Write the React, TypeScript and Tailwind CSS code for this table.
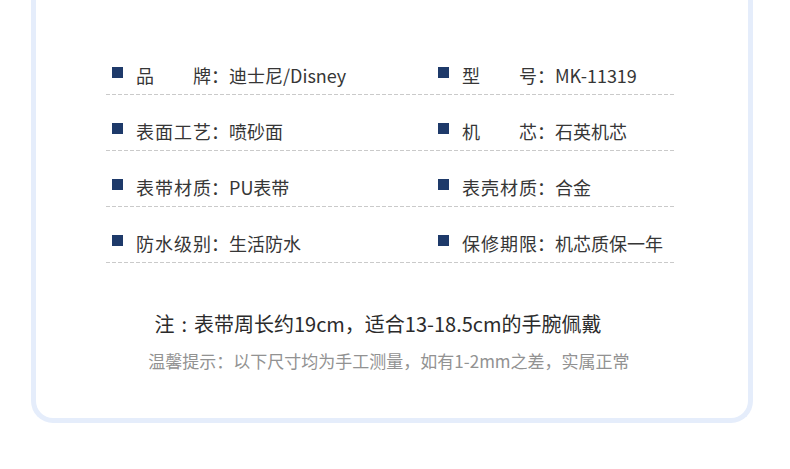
import React from "react";

const FONT = { fontFamily: '"Noto Sans CJK SC", "Noto Sans", sans-serif' };

type Item = { label: string; value: string };

const rows: [Item, Item][] = [
  [
    { label: "品牌", value: "迪士尼/Disney" },
    { label: "型号", value: "MK-11319" },
  ],
  [
    { label: "表面工艺", value: "喷砂面" },
    { label: "机芯", value: "石英机芯" },
  ],
  [
    { label: "表带材质", value: "PU表带" },
    { label: "表壳材质", value: "合金" },
  ],
  [
    { label: "防水级别", value: "生活防水" },
    { label: "保修期限", value: "机芯质保一年" },
  ],
];

function Label({ text }: { text: string }) {
  const chars = Array.from(text);
  return (
    <span className="flex w-[75px] justify-between">
      {chars.map((c, i) => (
        <span key={i}>{c}</span>
      ))}
    </span>
  );
}

function Cell({ item }: { item: Item }) {
  return (
    <div className="flex items-center">
      <span className="mb-[5px] ml-[6px] mr-[13px] h-[11px] w-[11px] bg-[#1e3a6a]" />
      <Label text={item.label} />
      <span>：</span>
      <span>{item.value}</span>
    </div>
  );
}

export default function App() {
  return (
    <div className="h-[469px] w-[790px] bg-white" style={FONT}>
      <div className="ml-[31px] h-[423px] w-[722px] rounded-b-[22px] border-x-[5px] border-b-[5px] border-[#e5edfb] bg-white">
        <div className="ml-[70px] w-[569px] pt-[39px] text-[18px] leading-[22px] text-[#363636]">
          {rows.map((r, i) => (
            <div key={i} className="flex h-[56px] flex-col justify-end">
              <div className="grid grid-cols-[326px_1fr] pb-[8px]">
                <Cell item={r[0]} />
                <Cell item={r[1]} />
              </div>
              <div className="h-px w-full bg-[repeating-linear-gradient(to_right,#cacaca_0_4px,transparent_4px_6px)]" />
            </div>
          ))}
        </div>
        <div className="mt-[48px] flex flex-col items-center">
          <div className="ml-[-28px] flex text-[20px] leading-[26px] text-[#2b2b2b]">
            <span>注</span>
            <span className="mx-[7px]">:</span>
            <span>表带周长约19cm，适合13-18.5cm的手腕佩戴</span>
          </div>
          <div className="mt-[12px] ml-[-6px] text-[17px] leading-[24px] text-[#929292]">
            温馨提示：以下尺寸均为手工测量，如有1-2mm之差，实属正常
          </div>
        </div>
      </div>
    </div>
  );
}
